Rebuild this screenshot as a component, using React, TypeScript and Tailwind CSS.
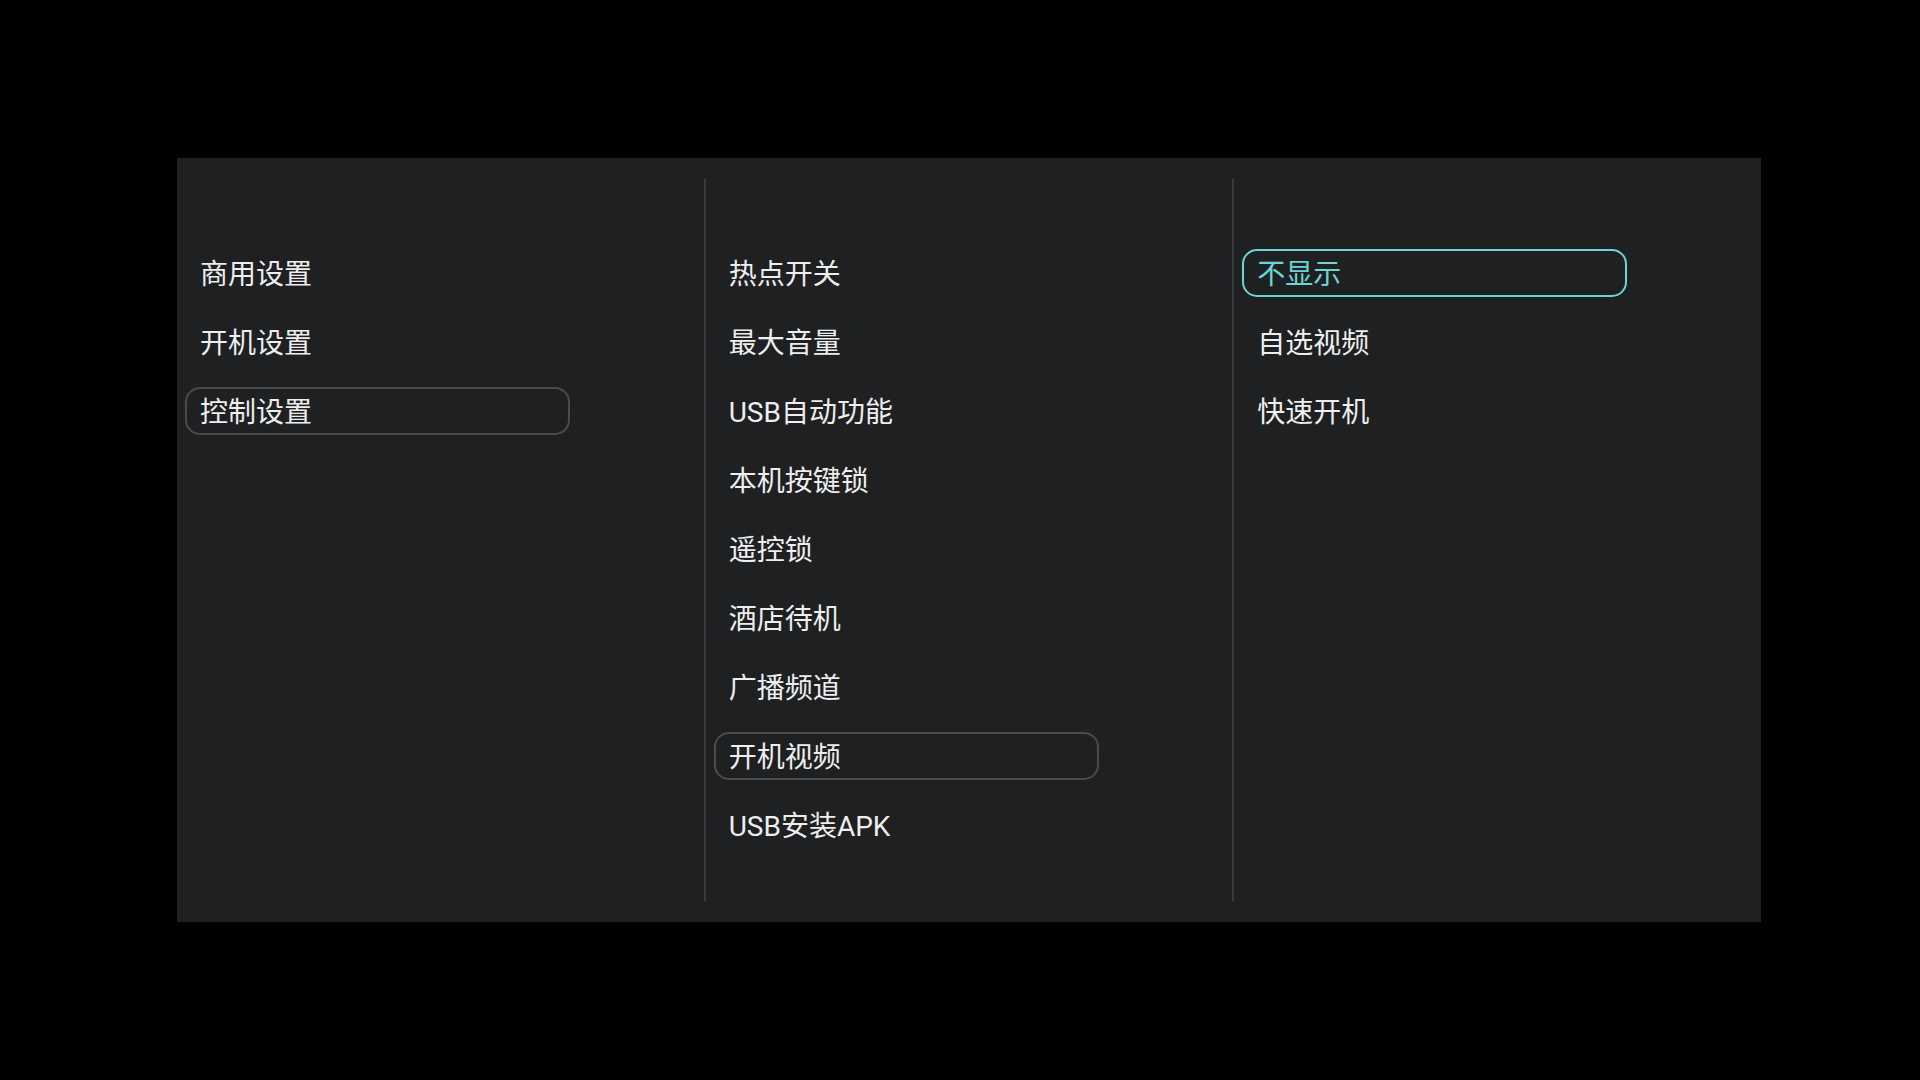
const col1 = ['商用设置', '开机设置', '控制设置'];
const col2 = ['热点开关', '最大音量', 'USB自动功能', '本机按键锁', '遥控锁', '酒店待机', '广播频道', '开机视频', 'USB安装APK'];
const col3 = ['不显示', '自选视频', '快速开机'];

type ColumnProps = {
  items: string[];
  selected: number;
  focused?: boolean;
  divider?: boolean;
};

function MenuColumn({ items, selected, focused, divider }: ColumnProps) {
  return (
    <div className={divider ? 'flex-1 border-l-2 border-[#38393b] pl-[8px]' : 'flex-1 pl-[8px]'}>
      <ul className="flex flex-col gap-[21px] pt-[70px]">
        {items.map((label, i) => {
          const active = i === selected;
          let cls = 'flex h-[48px] w-[385px] items-center rounded-[15px] border-2 border-transparent pt-[3px] pl-[13px] text-[28px] leading-none text-[#eeeeee]';
          if (active && focused) cls = 'flex h-[48px] w-[385px] items-center rounded-[15px] border-2 border-[#6dd3d3] pt-[3px] pl-[13px] text-[28px] leading-none text-[#6dd3d3]';
          else if (active) cls = 'flex h-[48px] w-[385px] items-center rounded-[15px] border-2 border-[#4a4b4d] pt-[3px] pl-[13px] text-[28px] leading-none text-[#eeeeee]';
          return (
            <li key={label} className={cls}>
              {label}
            </li>
          );
        })}
      </ul>
    </div>
  );
}

export default function App() {
  return (
    <div
      className="flex h-[1080px] w-[1920px] items-start bg-black pt-[158px] pl-[177px]"
      style={{ fontFamily: 'Roboto, "Noto Sans CJK SC", sans-serif' }}
    >
      <div className="flex h-[764px] w-[1584px] bg-[#1f2022] py-[21px]">
        <MenuColumn items={col1} selected={2} />
        <MenuColumn items={col2} selected={7} divider />
        <MenuColumn items={col3} selected={0} focused divider />
      </div>
    </div>
  );
}
